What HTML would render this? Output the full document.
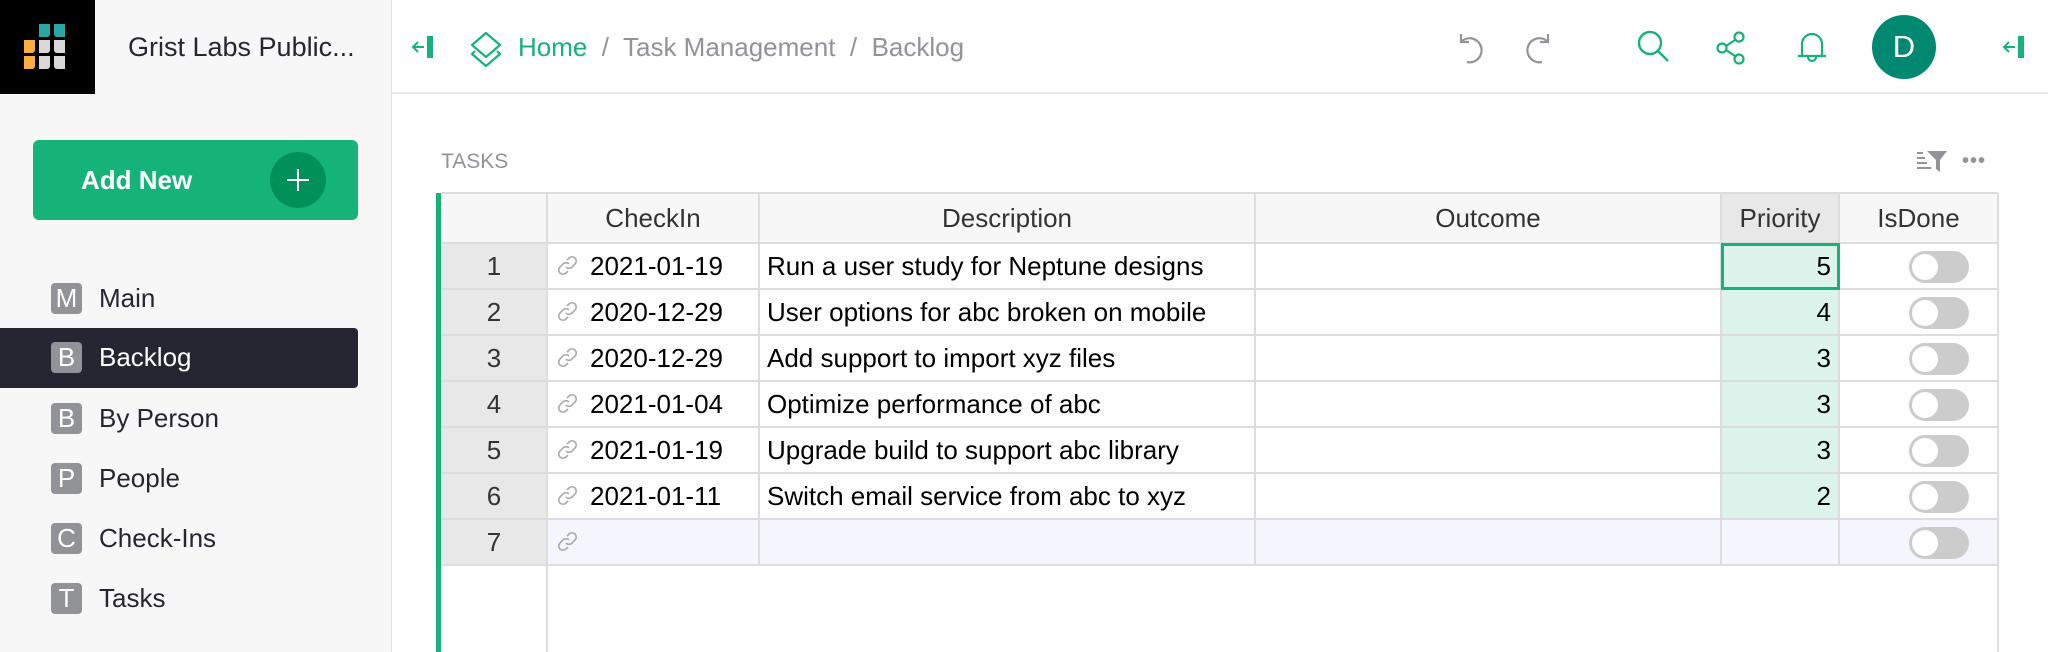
<!DOCTYPE html>
<html><head><meta charset="utf-8"><style>
*{box-sizing:border-box;margin:0;padding:0}
body{width:2048px;height:652px;overflow:hidden;background:#fff;font-family:"Liberation Sans",sans-serif;position:relative;color:#262633}
.a{position:absolute}
.side{left:0;top:94px;width:392px;height:558px;background:#f7f7f7;border-right:1px solid #e2e2e2}
.hdr{left:0;top:0;width:2048px;height:94px;border-bottom:2px solid #e8e8e8}
.item{position:absolute;left:0;width:358px;height:60px;font-size:26px;color:#262633}
.item .ic{position:absolute;left:51px;top:14px;width:31px;height:31px;border-radius:4px;background:#929299;color:#fff;font-size:26px;line-height:31px;text-align:center}
.item .t{position:absolute;left:99px;top:14px;line-height:30px}
.cell{position:absolute;font-size:26px;line-height:30px;color:#000;white-space:nowrap}
.hl{position:absolute;background:#ddd}
.tog{position:absolute;left:1909px;width:60px;height:32px;border-radius:16px;background:#ccc}
.tog:after{content:"";position:absolute;left:3px;top:3px;width:26px;height:26px;border-radius:13px;background:#fff}
</style></head><body>
<div class="a hdr"></div>
<div class="a" style="left:0;top:0;width:95px;height:94px;background:#000"></div>
<svg class="a" style="left:0;top:0" width="95" height="94">
<g>
<path d="M39 24h11v10a3 3 0 0 1-3 3h-8z" fill="#2aa6a6"/><path d="M54 24h11v13h-8a3 3 0 0 1-3-3z" fill="#2aa6a6"/>
<path d="M24 40h11v10a3 3 0 0 1-3 3h-8z" fill="#f9ae41"/><path d="M39 40h11v10a3 3 0 0 1-3 3h-8z" fill="#d9d9d9"/><path d="M54 40h11v13h-8a3 3 0 0 1-3-3z" fill="#d9d9d9"/>
<path d="M24 56h11v10a3 3 0 0 1-3 3h-8z" fill="#f9ae41"/><path d="M39 56h11v10a3 3 0 0 1-3 3h-8z" fill="#d9d9d9"/><path d="M54 56h11v13h-8a3 3 0 0 1-3-3z" fill="#d9d9d9"/>
</g></svg>
<div class="a" style="left:95px;top:0;width:297px;height:94px;background:#f7f7f7;border-right:1px solid #e2e2e2"></div>
<div class="a" style="left:128px;top:31px;font-size:27px;line-height:32px;color:#262633">Grist Labs Public...</div>
<svg class="a" style="left:410px;top:34px" width="28" height="26"><path d="M14 13H3M8 8l-5 5 5 5" stroke="#16b378" stroke-width="2" fill="none"/><rect x="17" y="2" width="6" height="22" fill="#16b378"/></svg>
<svg class="a" style="left:467px;top:30px" width="38" height="38"><path d="M19 3l14 12-14 12L5 15z M8 21l-3 3 14 12 14-12-3-3" stroke="#16b378" stroke-width="2.2" fill="none" stroke-linejoin="round"/></svg>
<div class="a" style="left:518px;top:32px;font-size:26px;line-height:30px;color:#16b378">Home <span style="color:#929299">&nbsp;/&nbsp; Task Management &nbsp;/&nbsp; Backlog</span></div>
<svg class="a" style="left:1455px;top:30px" width="36" height="36"><path d="M6 4v8h8M7 11A12 12 0 1 1 12 32" stroke="#929299" stroke-width="2.2" fill="none"/></svg>
<svg class="a" style="left:1518px;top:30px" width="36" height="36"><path d="M30 4v8h-8M29 11A12 12 0 1 0 24 32" stroke="#929299" stroke-width="2.2" fill="none"/></svg>
<svg class="a" style="left:1636px;top:29px" width="36" height="36"><circle cx="14" cy="14" r="11" stroke="#16b378" stroke-width="2.4" fill="none"/><path d="M22 22l10 10" stroke="#16b378" stroke-width="2.4"/></svg>
<svg class="a" style="left:1714px;top:30px" width="36" height="36"><circle cx="25" cy="7" r="4.5" stroke="#16b378" stroke-width="2.2" fill="none"/><circle cx="8" cy="18" r="4.5" stroke="#16b378" stroke-width="2.2" fill="none"/><circle cx="25" cy="29" r="4.5" stroke="#16b378" stroke-width="2.2" fill="none"/><path d="M12 16l9-6M12 20l9 6" stroke="#16b378" stroke-width="2.2"/></svg>
<svg class="a" style="left:1794px;top:29px" width="36" height="36"><path d="M8 27V15a10 10 0 0 1 20 0v12M4 27h28M14 28a4 4 0 0 0 8 0" stroke="#16b378" stroke-width="2.2" fill="none"/></svg>
<div class="a" style="left:1872px;top:15px;width:64px;height:64px;border-radius:32px;background:#008970;color:#fff;font-size:31px;text-align:center;line-height:64px">D</div>
<svg class="a" style="left:2001px;top:34px" width="28" height="26"><path d="M14 13H3M8 8l-5 5 5 5" stroke="#16b378" stroke-width="2" fill="none"/><rect x="17" y="2" width="6" height="22" fill="#16b378"/></svg>

<div class="a side"></div>
<div class="a" style="left:33px;top:140px;width:325px;height:80px;border-radius:6px;background:#16b378"></div>
<div class="a" style="left:81px;top:165px;font-size:26px;line-height:30px;font-weight:bold;color:#fff">Add New</div>
<div class="a" style="left:270px;top:152px;width:56px;height:56px;border-radius:28px;background:#009058"></div>
<svg class="a" style="left:286px;top:168px" width="24" height="24"><path d="M12 1v22M1 12h22" stroke="#fff" stroke-width="2"/></svg>
<div class="item" style="top:269px"><div class="ic">M</div><div class="t">Main</div></div>
<div class="item" style="top:328px;height:60px;background:#262633;border-radius:0 4px 4px 0;color:#fff"><div class="ic">B</div><div class="t">Backlog</div></div>
<div class="item" style="top:389px"><div class="ic">B</div><div class="t">By Person</div></div>
<div class="item" style="top:449px"><div class="ic">P</div><div class="t">People</div></div>
<div class="item" style="top:509px"><div class="ic">C</div><div class="t">Check-Ins</div></div>
<div class="item" style="top:569px"><div class="ic">T</div><div class="t">Tasks</div></div>

<div class="a" style="left:441px;top:150px;font-size:21px;line-height:24px;color:#929299">TASKS</div>
<svg class="a" style="left:1915px;top:149px" width="34" height="24"><path d="M2 4h6M2 9h8M2 14h10M2 19h14" stroke="#929299" stroke-width="2"/><path d="M12 2h20l-7 9v12l-4-3v-9z" fill="#929299"/></svg>
<div class="a" style="left:1962px;top:150px;font-size:20px;color:#929299;letter-spacing:1px;font-weight:bold">•••</div>

<!-- grid -->
<div class="a" style="left:436px;top:193px;width:5px;height:459px;background:#16b378"></div>
<div class="a" style="left:441px;top:193px;width:1557px;height:50px;background:#f7f7f7"></div>
<div class="a" style="left:1721px;top:193px;width:118px;height:50px;background:#e8e8e8"></div>
<div class="a" style="left:441px;top:243px;width:106px;height:322px;background:#e8e8e8"></div>
<div class="a" style="left:1721px;top:243px;width:118px;height:276px;background:#dcf4eb"></div>
<div class="a" style="left:547px;top:519px;width:1451px;height:46px;background:#f4f5fd"></div>
<div class="a" style="left:441px;top:519px;width:106px;height:46px;background:#e8e8e8"></div>
<div class="hl" style="left:441px;top:192px;width:1557px;height:2px"></div>
<div class="hl" style="left:441px;top:242px;width:1557px;height:2px"></div>
<div class="hl" style="left:441px;top:288px;width:1557px;height:2px"></div>
<div class="hl" style="left:441px;top:334px;width:1557px;height:2px"></div>
<div class="hl" style="left:441px;top:380px;width:1557px;height:2px"></div>
<div class="hl" style="left:441px;top:426px;width:1557px;height:2px"></div>
<div class="hl" style="left:441px;top:472px;width:1557px;height:2px"></div>
<div class="hl" style="left:441px;top:518px;width:1557px;height:2px"></div>
<div class="hl" style="left:441px;top:564px;width:1557px;height:2px"></div>
<div class="hl" style="left:546px;top:193px;width:2px;height:459px"></div>
<div class="hl" style="left:758px;top:193px;width:2px;height:372px"></div>
<div class="hl" style="left:1254px;top:193px;width:2px;height:372px"></div>
<div class="hl" style="left:1720px;top:193px;width:2px;height:372px"></div>
<div class="hl" style="left:1838px;top:193px;width:2px;height:372px"></div>
<div class="hl" style="left:1997px;top:193px;width:2px;height:459px"></div>
<div class="a" style="left:1721px;top:243px;width:119px;height:47px;border:3px solid #16b378"></div>
<div class="cell" style="left:547px;width:212px;top:203px;text-align:center;color:#333">CheckIn</div>
<div class="cell" style="left:759px;width:496px;top:203px;text-align:center;color:#333">Description</div>
<div class="cell" style="left:1255px;width:466px;top:203px;text-align:center;color:#333">Outcome</div>
<div class="cell" style="left:1721px;width:118px;top:203px;text-align:center;color:#333">Priority</div>
<div class="cell" style="left:1839px;width:159px;top:203px;text-align:center;color:#333">IsDone</div>

<svg width="0" height="0" style="position:absolute"><defs><g id="lk"><path d="M10 5l2-2a4 4 0 0 1 6 6l-3 3a4 4 0 0 1-6 0M11 16l-2 2a4 4 0 0 1-6-6l3-3a4 4 0 0 1 6 0" stroke="#aaa" stroke-width="1.6" fill="none"/></g></defs></svg>

<div class="cell" style="left:441px;width:106px;top:251px;text-align:center;color:#333">1</div>
<svg class="a" style="left:557px;top:255px" width="22" height="22"><use href="#lk"/></svg>
<div class="cell" style="left:590px;top:251px">2021-01-19</div>
<div class="cell" style="left:767px;top:251px">Run a user study for Neptune designs</div>
<div class="cell" style="left:1721px;width:110px;top:251px;text-align:right">5</div>
<div class="tog" style="top:251px"></div>

<div class="cell" style="left:441px;width:106px;top:297px;text-align:center;color:#333">2</div>
<svg class="a" style="left:557px;top:301px" width="22" height="22"><use href="#lk"/></svg>
<div class="cell" style="left:590px;top:297px">2020-12-29</div>
<div class="cell" style="left:767px;top:297px">User options for abc broken on mobile</div>
<div class="cell" style="left:1721px;width:110px;top:297px;text-align:right">4</div>
<div class="tog" style="top:297px"></div>

<div class="cell" style="left:441px;width:106px;top:343px;text-align:center;color:#333">3</div>
<svg class="a" style="left:557px;top:347px" width="22" height="22"><use href="#lk"/></svg>
<div class="cell" style="left:590px;top:343px">2020-12-29</div>
<div class="cell" style="left:767px;top:343px">Add support to import xyz files</div>
<div class="cell" style="left:1721px;width:110px;top:343px;text-align:right">3</div>
<div class="tog" style="top:343px"></div>

<div class="cell" style="left:441px;width:106px;top:389px;text-align:center;color:#333">4</div>
<svg class="a" style="left:557px;top:393px" width="22" height="22"><use href="#lk"/></svg>
<div class="cell" style="left:590px;top:389px">2021-01-04</div>
<div class="cell" style="left:767px;top:389px">Optimize performance of abc</div>
<div class="cell" style="left:1721px;width:110px;top:389px;text-align:right">3</div>
<div class="tog" style="top:389px"></div>

<div class="cell" style="left:441px;width:106px;top:435px;text-align:center;color:#333">5</div>
<svg class="a" style="left:557px;top:439px" width="22" height="22"><use href="#lk"/></svg>
<div class="cell" style="left:590px;top:435px">2021-01-19</div>
<div class="cell" style="left:767px;top:435px">Upgrade build to support abc library</div>
<div class="cell" style="left:1721px;width:110px;top:435px;text-align:right">3</div>
<div class="tog" style="top:435px"></div>

<div class="cell" style="left:441px;width:106px;top:481px;text-align:center;color:#333">6</div>
<svg class="a" style="left:557px;top:485px" width="22" height="22"><use href="#lk"/></svg>
<div class="cell" style="left:590px;top:481px">2021-01-11</div>
<div class="cell" style="left:767px;top:481px">Switch email service from abc to xyz</div>
<div class="cell" style="left:1721px;width:110px;top:481px;text-align:right">2</div>
<div class="tog" style="top:481px"></div>

<div class="cell" style="left:441px;width:106px;top:527px;text-align:center;color:#333">7</div>
<svg class="a" style="left:557px;top:531px" width="22" height="22"><use href="#lk"/></svg>
<div class="tog" style="top:527px"></div>
</body></html>
